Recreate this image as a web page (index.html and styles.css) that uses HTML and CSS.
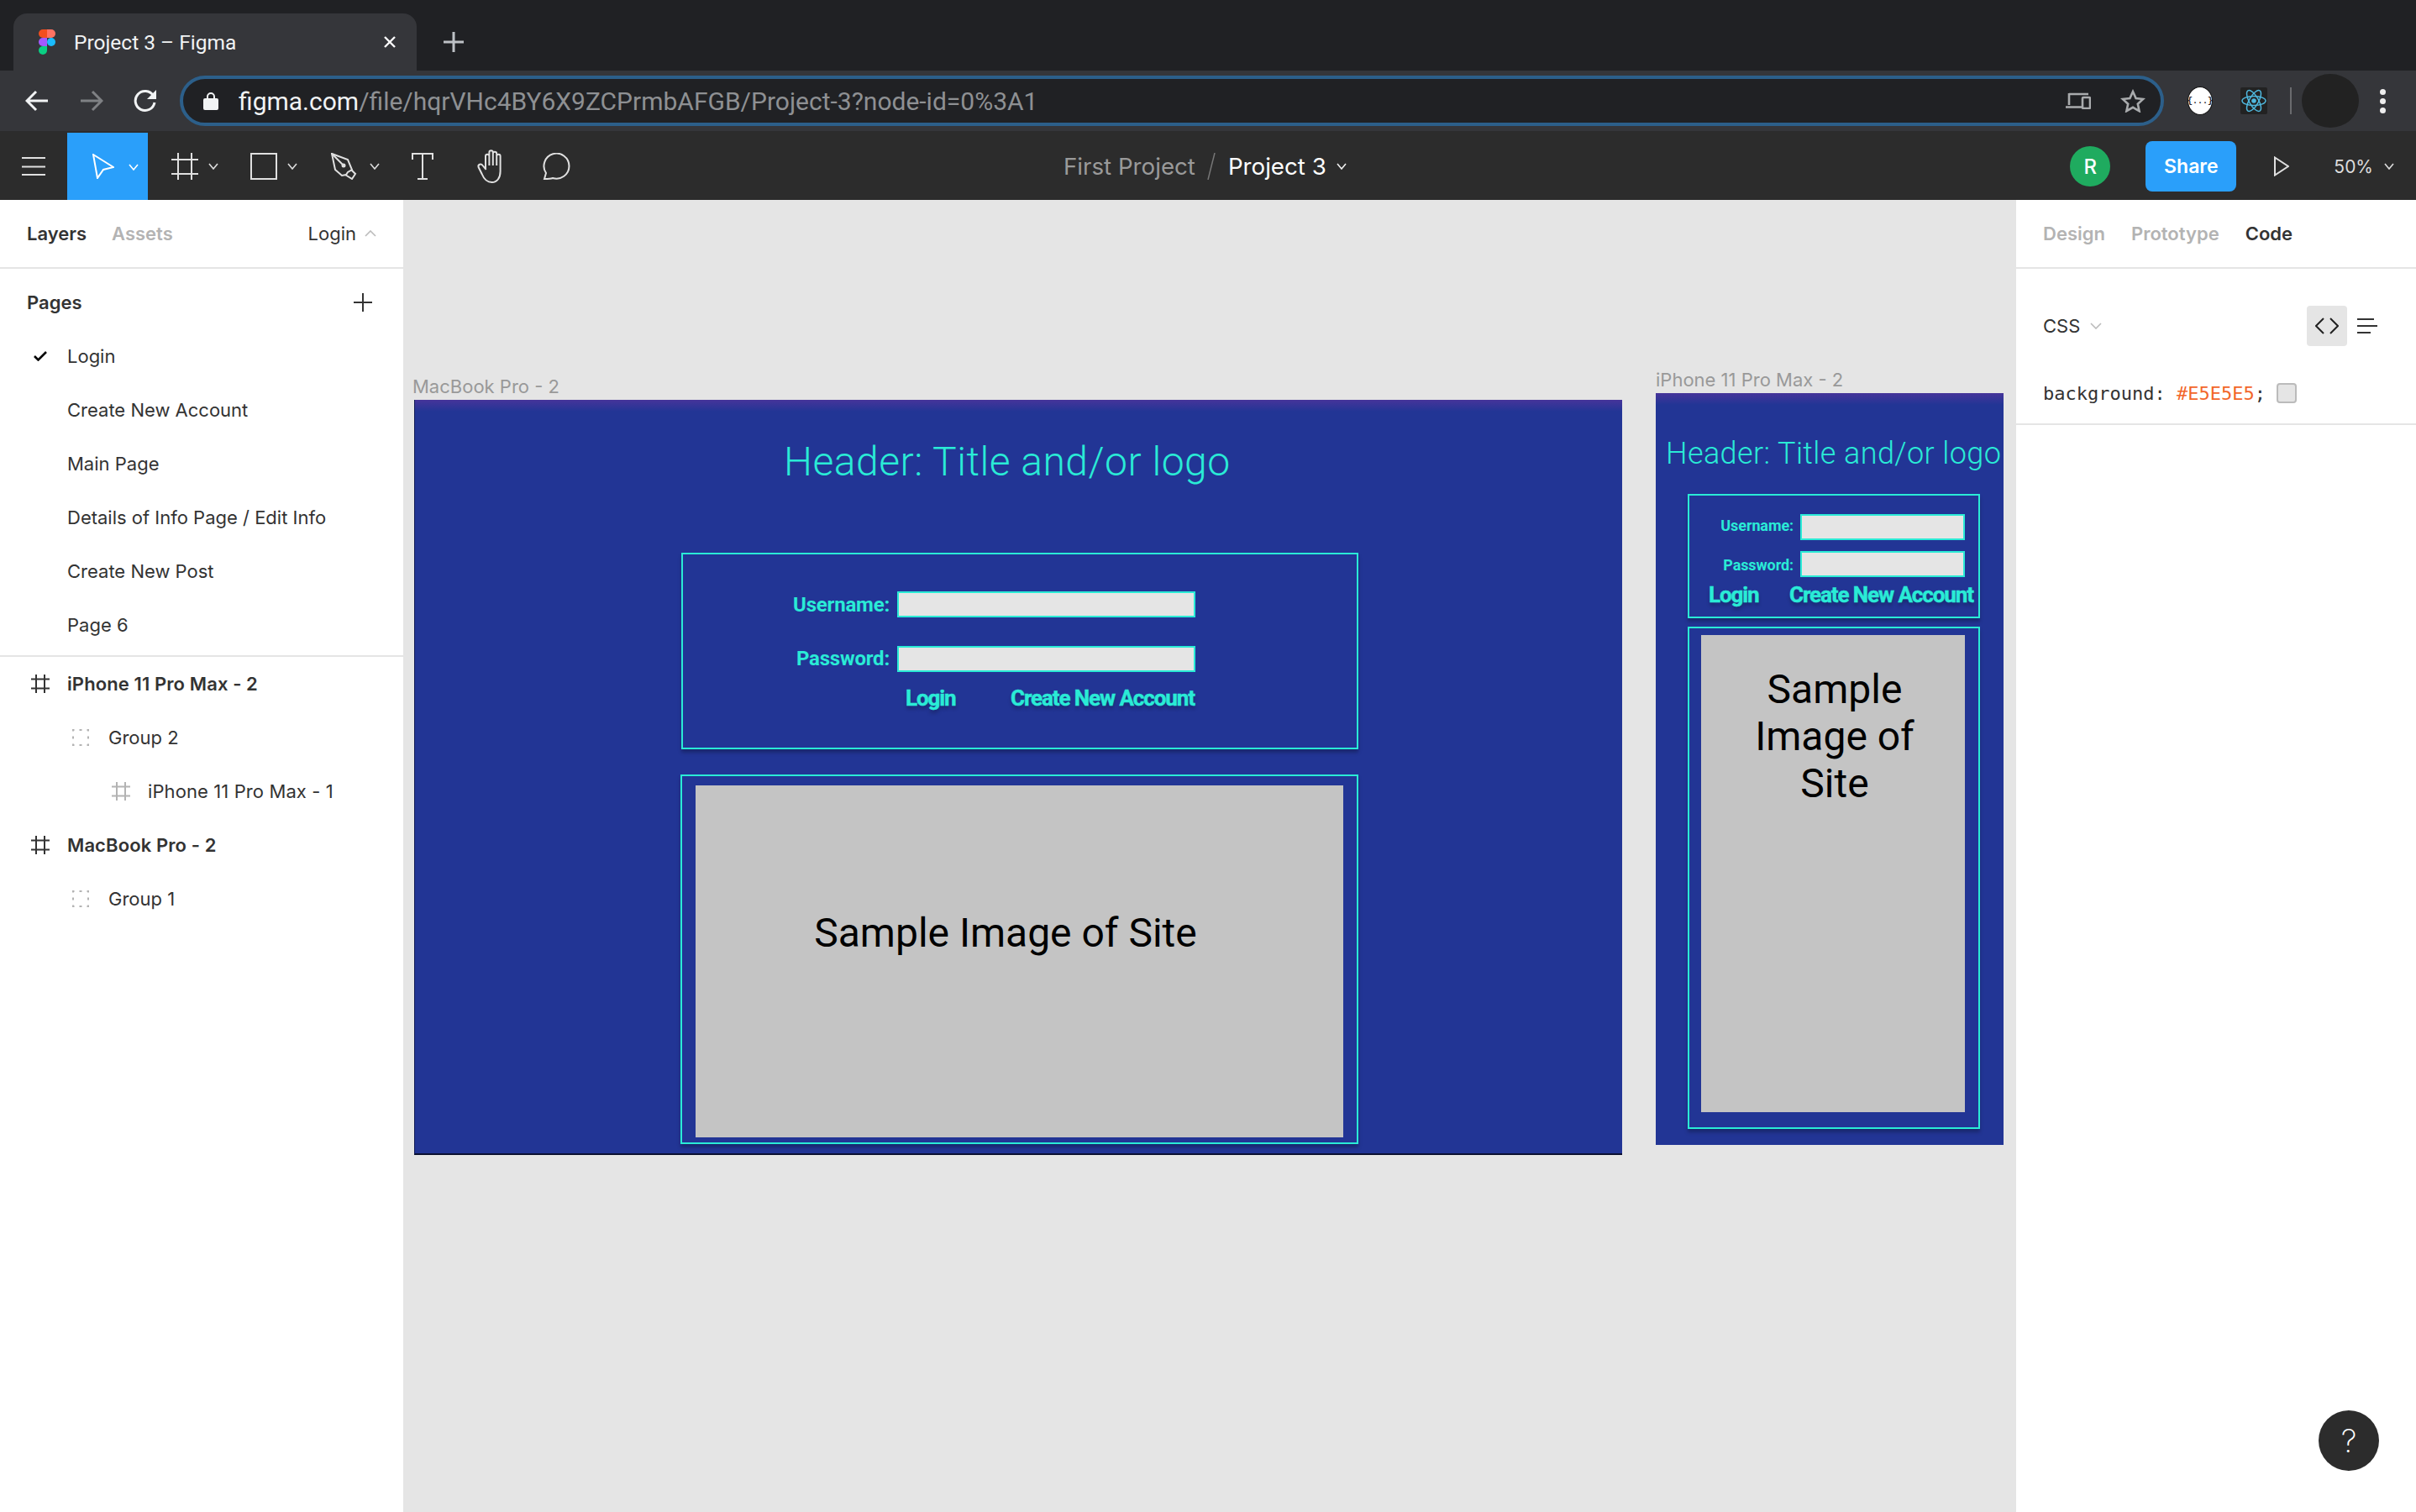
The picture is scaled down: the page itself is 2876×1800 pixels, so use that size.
FILE: index.html
```html
<!DOCTYPE html>
<html lang="en">
<head>
<meta charset="utf-8">
<title>Project 3 – Figma</title>
<link rel="stylesheet" href="styles.css">
</head>
<body>
<div class="app">
  <header class="tabstrip">
    <div class="tab">
      <svg class="figma-logo" viewBox="0 0 20 30" width="20" height="30"><path fill="#F24E1E" d="M0 5a5 5 0 0 1 5-5h5v10H5a5 5 0 0 1-5-5z"/><path fill="#FF7262" d="M10 0h5a5 5 0 0 1 0 10h-5z"/><path fill="#A259FF" d="M0 15a5 5 0 0 1 5-5h5v10H5a5 5 0 0 1-5-5z"/><circle fill="#1ABCFE" cx="15" cy="15" r="5"/><path fill="#0ACF83" d="M0 25a5 5 0 0 1 5-5h5v5a5 5 0 0 1-10 0z"/></svg>
      <span class="tab-title">Project 3 – Figma</span>
      <svg class="tab-close" viewBox="0 0 16 16" width="16" height="16"><path d="M2 2l12 12M14 2L2 14" stroke="#fff" stroke-width="2.4"/></svg>
    </div>
    <svg class="tab-new" viewBox="0 0 24 24" width="24" height="24"><path d="M12 0v24M0 12h24" stroke="#bdc1c6" stroke-width="3"/></svg>
  </header>

  <div class="chromebar">
    <svg class="nav nav-back" viewBox="0 0 28 26" width="28" height="26"><path d="M27 13H3M13 2L2 13l11 11" fill="none" stroke="#f1f3f4" stroke-width="3"/></svg>
    <svg class="nav nav-fwd" viewBox="0 0 28 26" width="28" height="26"><path d="M1 13h24M15 2l11 11-11 11" fill="none" stroke="#7f8184" stroke-width="3"/></svg>
    <svg class="nav nav-reload" viewBox="0 0 28 28" width="28" height="28"><path d="M23.5 8A11.5 11.5 0 1 0 25 16" fill="none" stroke="#f1f3f4" stroke-width="3"/><path d="M27 1v11H16z" fill="#f1f3f4"/></svg>
    <div class="omnibox">
      <svg class="lock" viewBox="0 0 18 22" width="18" height="22"><path d="M5 9V6a4 4 0 0 1 8 0v3" fill="none" stroke="#f1f3f4" stroke-width="2"/><rect y="8" width="18" height="14" rx="2" fill="#f1f3f4"/></svg>
      <span class="url"><span class="url-host">figma.com</span>/file/hqrVHc4BY6X9ZCPrmbAFGB/Project-3?node-id=0%3A1</span>
      <svg class="omni-device" viewBox="0 0 30 20" width="30" height="20"><path d="M4 2h23M4 1v14M0 17.500h20" fill="none" stroke="#a9abad" stroke-width="2.600"/><rect x="20" y="6" width="9" height="13" rx="1" fill="none" stroke="#a9abad" stroke-width="2.600"/></svg>
      <svg class="omni-star" viewBox="0 0 30 28" width="30" height="28"><path d="M15 3l3.600 8 8.600.9-6.400 5.800 1.800 8.500L15 21.800 7.400 26.200l1.800-8.500L2.800 11.900l8.600-.9z" fill="none" stroke="#a9abad" stroke-width="2.600"/></svg>
    </div>
    <div class="ext-json"><span>{...}</span></div>
    <svg class="ext-react" viewBox="0 0 32 32" width="32" height="32"><rect width="32" height="32" rx="2" fill="#222"/><g fill="none" stroke="#4fb8de" stroke-width="1.500"><ellipse cx="16" cy="16" rx="14" ry="5.500"/><ellipse cx="16" cy="16" rx="14" ry="5.500" transform="rotate(60 16 16)"/><ellipse cx="16" cy="16" rx="14" ry="5.500" transform="rotate(120 16 16)"/></g><circle cx="16" cy="16" r="2.800" fill="#4fb8de"/></svg>
    <div class="chrome-sep"></div>
    <div class="profile"></div>
    <div class="kebab"><i></i><i></i><i></i></div>
  </div>

  <nav class="toolbar">
    <svg class="burger" viewBox="0 0 28 22" width="28" height="22"><path d="M0 1h28M0 11.500h28M0 21h28" stroke="#e0e0e0" stroke-width="2"/></svg>
    <div class="tool-active">
      <svg viewBox="0 0 26 30" width="26" height="30"><path d="M1 1l24 15-12 3-7 10z" fill="none" stroke="#fff" stroke-width="2"/></svg>
      <svg class="chev" viewBox="0 0 12 8" width="12" height="8"><path d="M1 1l5 6 5-6" fill="none" stroke="#fff" stroke-width="1.600"/></svg>
    </div>
    <div class="tool tool-frame">
      <svg viewBox="0 0 32 32" width="32" height="32"><path d="M8 0v32M24 0v32M0 8h32M0 25h32" stroke="#e0e0e0" stroke-width="2"/></svg>
      <svg class="chev" viewBox="0 0 12 8" width="12" height="8"><path d="M1 1l5 6 5-6" fill="none" stroke="#ddd" stroke-width="1.600"/></svg>
    </div>
    <div class="tool tool-next">
      <svg viewBox="0 0 32 32" width="32" height="32"><rect x="1" y="1" width="30" height="30" fill="none" stroke="#e0e0e0" stroke-width="2"/></svg>
      <svg class="chev" viewBox="0 0 12 8" width="12" height="8"><path d="M1 1l5 6 5-6" fill="none" stroke="#ddd" stroke-width="1.600"/></svg>
    </div>
    <div class="tool tool-pen">
      <svg viewBox="0 0 34 32" width="34" height="32"><path d="M1 1l19 7 5 12-5 3-2 3-5 1-8-7z" fill="none" stroke="#e0e0e0" stroke-width="2"/><path d="M17 26l8 5 4-6-5-5M1 1l13 13" fill="none" stroke="#e0e0e0" stroke-width="2"/><circle cx="15" cy="15" r="2.500" fill="#e0e0e0"/></svg>
      <svg class="chev" viewBox="0 0 12 8" width="12" height="8"><path d="M1 1l5 6 5-6" fill="none" stroke="#ddd" stroke-width="1.600"/></svg>
    </div>
    <svg class="tool-t" viewBox="0 0 26 32" width="26" height="32"><path d="M1 8V1h24v7M13 1v30M7 31h12" fill="none" stroke="#e0e0e0" stroke-width="2"/></svg>
    <svg class="tool-hand" viewBox="0 0 36 40" width="36" height="40"><path d="M11 23V8a2.200 2.200 0 0 1 4.400 0v11M15.400 19V3.500a2.200 2.200 0 0 1 4.400 0V19M19.800 19V5a2.200 2.200 0 0 1 4.400 0v14M24.200 19V8a2.200 2.200 0 0 1 4.400 0v18c0 8-4 13-10 13-7 0-10-5-12-10l-4-8c-1-3 3-5 5-2l4 5" fill="none" stroke="#e0e0e0" stroke-width="2"/></svg>
    <svg class="tool-comment" viewBox="0 0 34 32" width="34" height="32"><path d="M2 31l2-7A15 15 0 1 1 12 30c-3 1-7 1-10 1z" fill="none" stroke="#e0e0e0" stroke-width="2"/></svg>

    <div class="crumbs">
      <span class="crumb-folder">First Project</span>
      <svg class="crumb-slash" viewBox="0 0 10 32" width="10" height="32"><path d="M9 0L1 32" stroke="#777" stroke-width="1.500"/></svg>
      <span class="crumb-file">Project 3</span>
      <svg class="chev crumb-chev" viewBox="0 0 12 8" width="12" height="8"><path d="M1 1l5 6 5-6" fill="none" stroke="#eee" stroke-width="1.600"/></svg>
    </div>

    <div class="toolbar-right">
      <div class="avatar">R</div>
      <div class="share">Share</div>
      <svg class="play" viewBox="0 0 18 24" width="18" height="24"><path d="M1 1.500L17 12 1 22.500z" fill="none" stroke="#e0e0e0" stroke-width="2"/></svg>
      <span class="zoom-level">50%</span>
      <svg class="chev" viewBox="0 0 12 8" width="12" height="8"><path d="M1 1l5 6 5-6" fill="none" stroke="#ddd" stroke-width="1.600"/></svg>
    </div>
  </nav>

  <main class="workspace">
    <aside class="left">
      <div class="panel-tabs">
        <span class="tab-on">Layers</span>
        <span class="tab-off">Assets</span>
        <span class="page-pick">Login</span>
        <svg class="page-chev" viewBox="0 0 14 8" width="14" height="8"><path d="M1 7l6-6 6 6" fill="none" stroke="#bbb" stroke-width="1.600"/></svg>
      </div>
      <div class="pages">
        <div class="pages-head">
          <span>Pages</span>
          <svg viewBox="0 0 22 22" width="22" height="22"><path d="M11 0v22M0 11h22" stroke="#333" stroke-width="2"/></svg>
        </div>
        <div class="row">
          <svg class="row-check" viewBox="0 0 16 12" width="16" height="12"><path d="M1 6l4.500 4.500L15 1" fill="none" stroke="#000" stroke-width="2.600"/></svg>
          <span>Login</span>
        </div>
        <div class="row"><span>Create New Account</span></div>
        <div class="row"><span>Main Page</span></div>
        <div class="row"><span>Details of Info Page / Edit Info</span></div>
        <div class="row"><span>Create New Post</span></div>
        <div class="row"><span>Page 6</span></div>
      </div>
      <div class="layers">
        <div class="row row-strong">
          <svg class="hash" viewBox="0 0 22 22" width="22" height="22"><path d="M6 0v22M16 0v22M0 5.500h22M0 16.500h22" stroke="#333" stroke-width="2"/></svg>
          <span>iPhone 11 Pro Max - 2</span>
        </div>
        <div class="row row-l1">
          <svg class="dash" viewBox="0 0 20 20" width="20" height="20"><rect x="1" y="1" width="18" height="18" fill="none" stroke="#b3b3b3" stroke-width="2" stroke-dasharray="3 6" stroke-dashoffset="1.500"/></svg>
          <span>Group 2</span>
        </div>
        <div class="row row-l2">
          <svg class="hash" viewBox="0 0 22 22" width="22" height="22"><path d="M6 0v22M16 0v22M0 5.500h22M0 16.500h22" stroke="#b3b3b3" stroke-width="2"/></svg>
          <span>iPhone 11 Pro Max - 1</span>
        </div>
        <div class="row row-strong">
          <svg class="hash" viewBox="0 0 22 22" width="22" height="22"><path d="M6 0v22M16 0v22M0 5.500h22M0 16.500h22" stroke="#333" stroke-width="2"/></svg>
          <span>MacBook Pro - 2</span>
        </div>
        <div class="row row-l1">
          <svg class="dash" viewBox="0 0 20 20" width="20" height="20"><rect x="1" y="1" width="18" height="18" fill="none" stroke="#b3b3b3" stroke-width="2" stroke-dasharray="3 6" stroke-dashoffset="1.500"/></svg>
          <span>Group 1</span>
        </div>
      </div>
    </aside>

    <section class="canvas">
      <div class="frame-label mac-label">MacBook Pro - 2</div>
      <div class="frame mac">
        <div class="node mac-header">Header: Title and/or logo</div>
        <div class="node box mac-login"></div>
        <div class="node field-label mac-user-l">Username:</div>
        <div class="node input mac-user"></div>
        <div class="node field-label mac-pass-l">Password:</div>
        <div class="node input mac-pass"></div>
        <div class="node link mac-link-login">Login</div>
        <div class="node link mac-link-new">Create New Account</div>
        <div class="node box mac-imgbox"></div>
        <div class="node picture mac-pic">Sample Image of Site</div>
      </div>

      <div class="frame-label ph-label">iPhone 11 Pro Max - 2</div>
      <div class="frame phone">
        <div class="node ph-header">Header: Title and/or logo</div>
        <div class="node box ph-login"></div>
        <div class="node field-label small ph-user-l">Username:</div>
        <div class="node input ph-user"></div>
        <div class="node field-label small ph-pass-l">Password:</div>
        <div class="node input ph-pass"></div>
        <div class="node link ph-link-login">Login</div>
        <div class="node link ph-link-new">Create New Account</div>
        <div class="node box ph-imgbox"></div>
        <div class="node picture ph-pic">Sample<br>Image of<br>Site</div>
      </div>
    </section>

    <aside class="right">
      <div class="panel-tabs right-tabs">
        <span class="tab-off">Design</span>
        <span class="tab-off">Prototype</span>
        <span class="tab-on">Code</span>
      </div>
      <div class="lang-row">
        <span>CSS</span>
        <svg class="lang-chev" viewBox="0 0 14 8" width="14" height="8"><path d="M1 1l6 6 6-6" fill="none" stroke="#bbb" stroke-width="1.600"/></svg>
        <div class="code-btn"><svg viewBox="0 0 28 20" width="28" height="20"><path d="M10 1l-9 9 9 9M18 1l9 9-9 9" fill="none" stroke="#222" stroke-width="2"/></svg></div>
        <svg class="list-btn" viewBox="0 0 24 18" width="24" height="18"><path d="M0 1h20M0 9h24M0 17h16" stroke="#333" stroke-width="2"/></svg>
      </div>
      <div class="code-line">
        <code>background: <b>#E5E5E5</b>;</code>
        <span class="swatch"></span>
      </div>
      <div class="help">?</div>
    </aside>
  </main>
</div>
</body>
</html>
```
FILE: styles.css
```css
* { box-sizing: border-box; }
html, body { margin: 0; padding: 0; }
body { width: 2876px; height: 1800px; overflow: hidden; font-family: Inter, "Liberation Sans", sans-serif; }
.app { display: flex; flex-direction: column; width: 2876px; height: 1800px; }
svg { display: block; flex: none; }

/* browser tab strip */
.tabstrip { height: 84px; background: #202124; display: flex; align-items: flex-start; flex: none; padding: 16px 0 0 16px; }
.tab { width: 480px; height: 68px; background: #35363a; border-radius: 16px 16px 0 0; display: flex; align-items: center; padding: 0 24px 0 30px; }
.tab-title { margin-left: 22px; font: 400 24.500px Roboto, sans-serif; color: #f1f3f4; flex: 1; white-space: nowrap; }
.tab-new { margin: 22px 0 0 32px; }

/* browser toolbar */
.chromebar { height: 72px; background: #35363a; display: flex; align-items: center; flex: none; padding-left: 30px; }
.nav-fwd { margin-left: 37px; }
.nav-reload { margin-left: 36px; }
.omnibox { margin-left: 27px; width: 2362px; height: 60px; background: #202124; border: 4px solid #2c5f8a; border-radius: 30px; display: flex; align-items: center; padding-left: 24px; }
.url { margin-left: 24px; font: 400 30px Roboto, sans-serif; color: #8e9093; white-space: nowrap; flex: 1; }
.url-host { color: #f1f3f4; }
.omni-star { margin: 0 18px 0 35px; }
.ext-json { margin-left: 28px; width: 30px; height: 34px; border-radius: 50%; background: #fff; border: 1px solid #111; display: flex; align-items: center; justify-content: center; font: 700 10px "Liberation Mono", monospace; color: #222; }
.ext-react { margin-left: 33px; }
.chrome-sep { margin-left: 27px; width: 2px; height: 32px; background: #6a6b6e; }
.profile { margin-left: 12px; width: 68px; height: 64px; border-radius: 50%; background: #222; }
.kebab { margin-left: 25px; display: flex; flex-direction: column; gap: 4px; }
.kebab i { display: block; width: 7px; height: 7px; border-radius: 50%; background: #eee; }

/* figma toolbar */
.toolbar { height: 82px; background: #2c2c2c; display: flex; align-items: center; flex: none; padding-top: 2px; position: relative; }
.burger { margin-left: 26px; }
.tool-active { margin-left: 26px; width: 96px; height: 80px; background: #2a9ffa; display: flex; align-items: center; padding-left: 30px; gap: 17px; }
.tool-active .chev { margin-top: 2px; }
.tool { display: flex; align-items: center; gap: 12px; }
.tool-frame { margin-left: 28px; }
.tool-next { margin-left: 38px; }
.tool-pen { margin-left: 40px; }
.tool-t { margin-left: 38px; }
.tool-hand { margin-left: 51px; }
.tool-comment { margin-left: 43px; }
.crumbs { margin-left: 586px; display: flex; align-items: center; font: 400 27.700px Inter, sans-serif; white-space: nowrap; }
.crumb-folder { color: #9a9a9a; }
.crumb-slash { margin: 0 15px 0 14px; }
.crumb-file { color: #fff; }
.crumb-chev { margin-left: 12px; }
.toolbar-right { margin-left: auto; display: flex; align-items: center; padding-right: 26px; }
.avatar { width: 48px; height: 48px; border-radius: 50%; background: #1fab5f; color: #fff; display: flex; align-items: center; justify-content: center; font: 500 24px Inter, sans-serif; }
.share { margin-left: 42px; width: 108px; height: 60px; border-radius: 8px; background: #2a9ffa; color: #fff; display: flex; align-items: center; justify-content: center; font: 600 23px Inter, sans-serif; }
.play { margin-left: 45px; }
.zoom-level { margin-left: 53px; color: #ddd; font: 400 21px Inter, sans-serif; }
.toolbar-right .chev { margin-left: 13px; }

/* workspace */
.workspace { flex: 1; display: flex; min-height: 0; }
.left { width: 480px; background: #fff; flex: none; color: #333; font-size: 22px; }
.right { width: 476px; background: #fff; flex: none; position: relative; color: #333; font-size: 22px; }
.canvas { flex: 1; background: #e5e5e5; position: relative; overflow: hidden; }

.panel-tabs { height: 82px; border-bottom: 2px solid #e5e5e5; display: flex; align-items: center; padding-left: 32px; font-weight: 600; }
.tab-on { color: #333; }
.tab-off { color: #b3b3b3; }
.panel-tabs .tab-off { margin-left: 30px; }
.page-pick { margin-left: auto; font-weight: 400; }
.page-chev { margin: 0 32px 0 10px; }
.right-tabs .tab-off { margin: 0 31px 0 0; }
.right-tabs .tab-off:first-child { margin-left: 0; }

.pages { border-bottom: 2px solid #e5e5e5; height: 462px; padding-top: 8px; }
.pages-head { height: 64px; display: flex; align-items: center; justify-content: space-between; padding: 0 37px 0 32px; font-weight: 600; }
.row { height: 64px; display: flex; align-items: center; padding-left: 80px; position: relative; white-space: nowrap; }
.row-check { position: absolute; left: 40px; top: 26px; }
.row-strong { font-weight: 600; padding-left: 37px; letter-spacing: 0.1px; }
.row-strong .hash { margin-right: 21px; }
.row-l1 { padding-left: 86px; }
.row-l1 .dash { margin-right: 23px; }
.row-l2 { padding-left: 133px; letter-spacing: 0.1px; }
.row-l2 .hash { margin-right: 21px; }

/* canvas frames */
.frame-label { position: absolute; color: #999; font-size: 22px; line-height: 26px; white-space: nowrap; }
.mac-label { left: 11px; top: 209px; }
.ph-label { left: 1491px; top: 201px; }
.frame { position: absolute; background: linear-gradient(#46349a 0, #223595 14px); }
.mac { left: 13px; top: 238px; width: 1438px; height: 899px; border-left: 1px solid #101a55; border-bottom: 2px solid #0b1030; }
.phone { left: 1491px; top: 230px; width: 414px; height: 895px; }

.node { position: absolute; white-space: nowrap; }
.mac-header, .ph-header { font-family: Roboto, sans-serif; font-weight: 300; color: #2aebd6; }
.mac-header { left: 439px; top: 42px; font-size: 48px; line-height: 64px; letter-spacing: 0.5px; }
.ph-header { left: 12px; top: 48px; font-size: 36px; line-height: 48px; letter-spacing: 0.4px; }
.box { border: 2px solid #2aebd6; box-shadow: 0 4px 4px rgba(0,0,0,.25); }
.mac-login { left: 317px; top: 182px; width: 806px; height: 234px; }
.mac-imgbox { left: 316px; top: 446px; width: 807px; height: 440px; }
.ph-login { left: 38px; top: 120px; width: 348px; height: 148px; }
.ph-imgbox { left: 38px; top: 278px; width: 348px; height: 598px; }

.field-label { font: 700 24px/28px Roboto, sans-serif; color: #2aebd6; text-align: right; letter-spacing: -0.2px; }
.field-label.small { font-size: 18px; line-height: 22px; letter-spacing: -0.1px; }
.mac-user-l { right: 872px; top: 230px; }
.mac-pass-l { right: 872px; top: 294px; }
.ph-user-l { right: 250px; top: 147px; }
.ph-pass-l { right: 250px; top: 194px; }
.input { background: #e5e5e5; border: 2px solid #2aebd6; }
.mac-user { left: 574px; top: 228px; width: 355px; height: 31px; }
.mac-pass { left: 574px; top: 293px; width: 355px; height: 31px; }
.ph-user { left: 172px; top: 144px; width: 196px; height: 31px; }
.ph-pass { left: 172px; top: 188px; width: 196px; height: 31px; }
.link { font: 700 26px/30px Roboto, sans-serif; color: #2aebd6; letter-spacing: -1.100px; -webkit-text-stroke: 0.5px #2aebd6; text-shadow: 0 4px 4px rgba(0,0,0,.25); }
.mac-link-login { left: 584px; top: 340px; }
.mac-link-new { left: 709px; top: 340px; }
.ph-link-login { left: 63px; top: 225px; }
.ph-link-new { left: 159px; top: 225px; }
.picture { background: #c4c4c4; color: #000; font: 400 48px/56px Roboto, sans-serif; text-align: center; }
.mac-pic { left: 334px; top: 459px; width: 771px; height: 419px; padding: 148px 33px 0 0; }
.ph-pic { left: 54px; top: 288px; width: 314px; height: 568px; padding: 37px 0 0 4px; }

/* right panel */
.lang-row { display: flex; align-items: center; height: 48px; margin-top: 44px; padding-left: 32px; }
.lang-chev { margin-left: 12px; }
.code-btn { margin-left: auto; width: 48px; height: 48px; border-radius: 4px; background: #e5e5e5; display: flex; align-items: center; justify-content: center; }
.list-btn { margin: 0 46px 0 12px; }
.code-line { margin-top: 32px; height: 62px; padding: 0 0 12px 32px; border-bottom: 2px solid #e5e5e5; display: flex; align-items: center; }
.code-line code { font: 400 22px "DejaVu Sans Mono", monospace; color: #333; white-space: pre; }
.code-line b { font-weight: 400; color: #f2662a; }
.swatch { margin-left: 13px; width: 24px; height: 24px; background: #e5e5e5; border: 2px solid #bbb; border-radius: 4px; }
.help { position: absolute; left: 360px; top: 1441px; width: 72px; height: 72px; border-radius: 50%; background: #2c2c2c; color: #fff; display: flex; align-items: center; justify-content: center; font: 200 38px Inter, sans-serif; }
```
